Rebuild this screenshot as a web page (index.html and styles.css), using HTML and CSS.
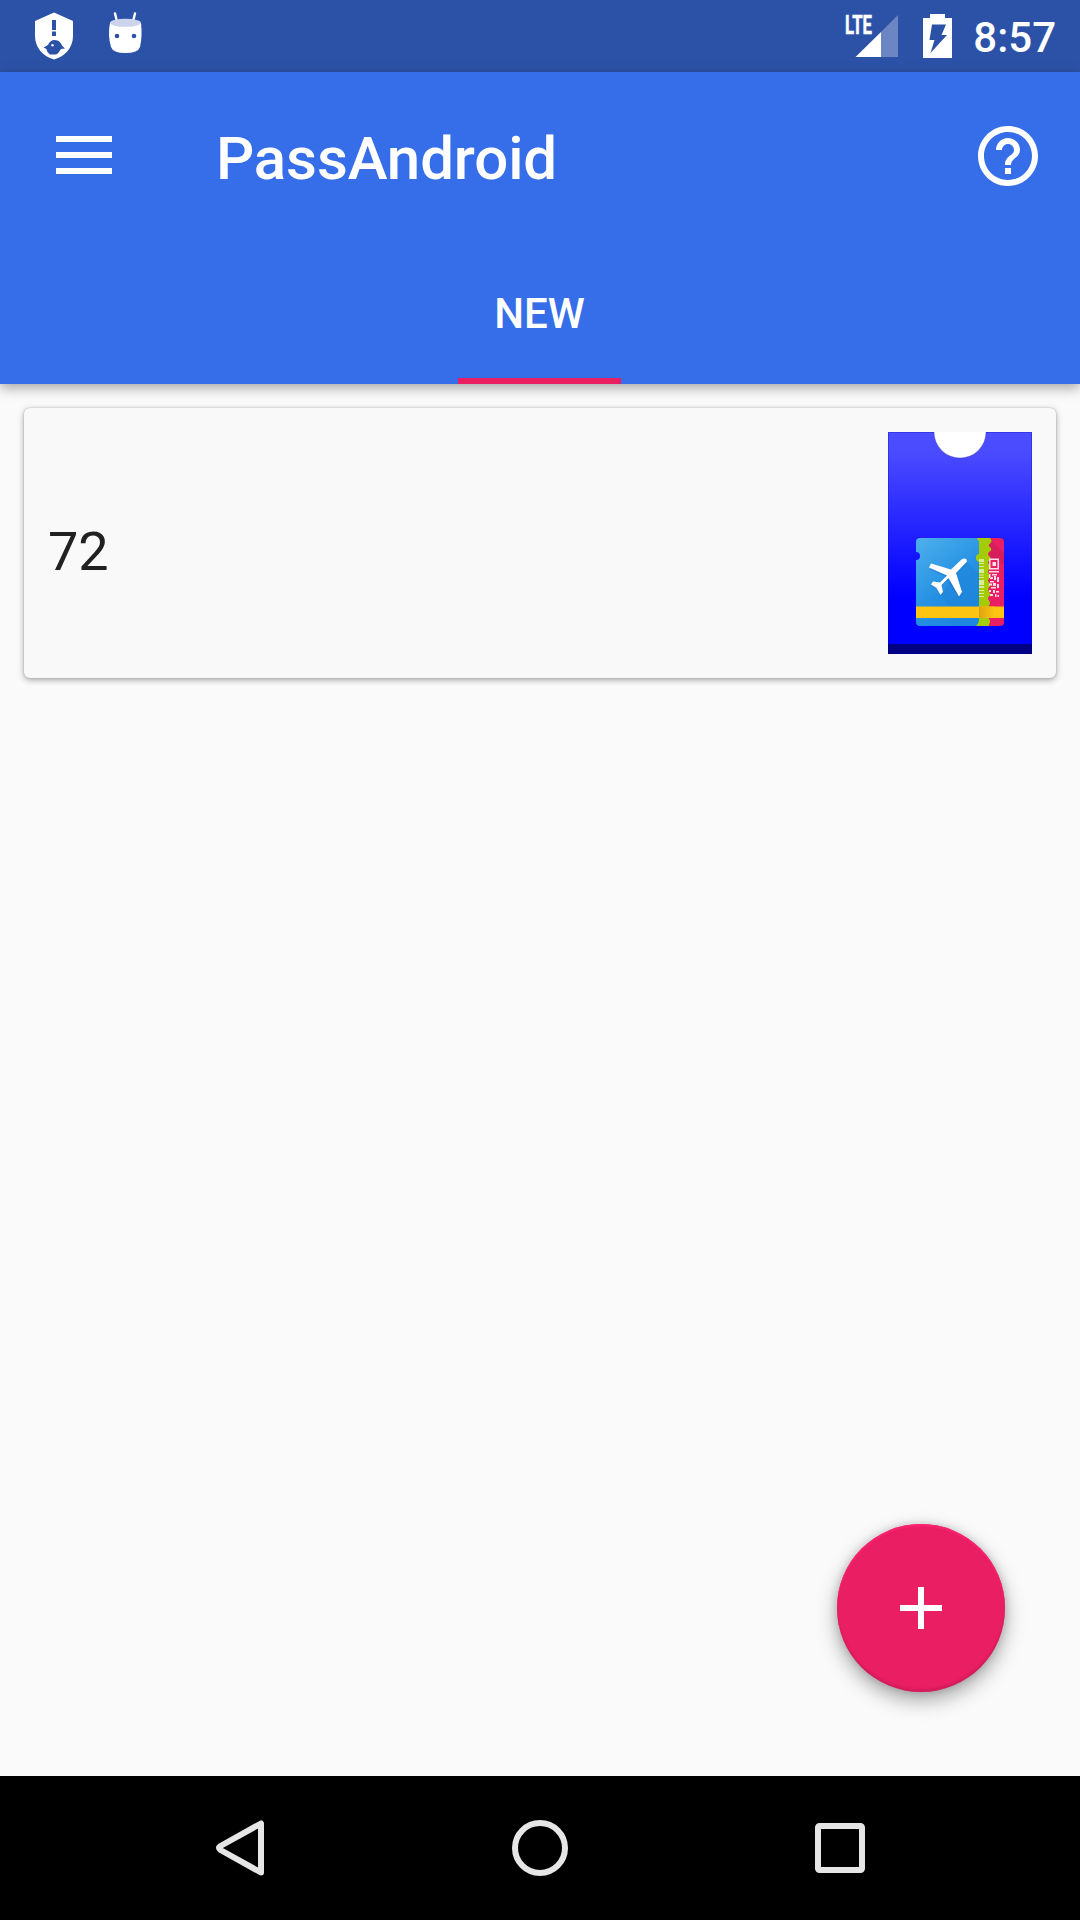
FILE: index.html
```html
<!DOCTYPE html>
<html lang="en">
<head>
<meta charset="utf-8">
<title>PassAndroid</title>
<link rel="stylesheet" href="styles.css">
</head>
<body>
<div class="screen">
  <header class="status">
    <svg class="status-shield" width="40" height="48" viewBox="0 0 40 48">
      <path fill="#fff" d="M20 .5 39 9v15c0 11.500-8 20.500-19 23.500C9 44.500 1 35.500 1 24V9z"/>
      <path fill="#2c52a8" d="M18 8h4v10h-4zM18 19.500h4V24h-4zM9.500 35.500l4.500-2.500c1-3 3.500-5 6.500-5 4.500 0 6.500 3 7.500 5.500l3 3-4 .500c-2 3-3 5-5 5.500h-6c-2-1.500-3-3-3.500-5.500z"/>
      <circle cx="18.500" cy="33.300" r="1.200" fill="#fff"/>
    </svg>
    <svg class="status-robot" width="36" height="42" viewBox="0 0 36 42">
      <path d="M8 1.500l2 8M28 1.500l-2 8" stroke="#fff" stroke-width="2.400" stroke-linecap="round"/>
      <path fill="#fff" d="M3 11h31q1.500 13-1 24-2 6-14.500 6T4 35Q.5 23 3 11z"/>
      <ellipse cx="18.500" cy="10.800" rx="15.500" ry="4" fill="#cbd4ea"/>
      <circle cx="10" cy="24" r="2.300" fill="#2c52a8"/>
      <circle cx="27" cy="24" r="2.300" fill="#2c52a8"/>
    </svg>
    <span class="spacer"></span>
    <svg class="status-signal" width="58" height="56" viewBox="-4 -12 58 56">
      <path fill="#6c86c3" d="M53 1v42H36V18z"/>
      <path fill="#fff" d="M36 18v25H10.500z"/>
      <text class="lte" x="0" y="20" textLength="27" lengthAdjust="spacingAndGlyphs">LTE</text>
    </svg>
    <svg class="status-battery" width="29" height="44" viewBox="0 0 29 44">
      <path fill="#fff" d="M7 0h15v4h7v40H0V4h7z"/>
      <path fill="#2c52a8" d="M9 10.500h14L18.500 21H24L7.500 39l4-13H6.500z"/>
    </svg>
    <span class="clock">8:57</span>
  </header>
  <div class="appbar">
    <div class="toolbar">
      <svg class="menu" width="56" height="38" viewBox="0 0 56 38"><path fill="#fff" d="M0 0h56v6H0zM0 16h56v6H0zM0 32h56v6H0z"/></svg>
      <h1 class="title">PassAndroid</h1>
      <span class="spacer"></span>
      <svg class="help" width="72" height="72" viewBox="0 0 24 24"><path fill="#fff" d="M11 18h2v-2h-2v2zm1-16C6.480 2 2 6.480 2 12s4.480 10 10 10 10-4.480 10-10S17.520 2 12 2zm0 18c-4.410 0-8-3.590-8-8s3.590-8 8-8 8 3.590 8 8-3.590 8-8 8zm0-14c-2.210 0-4 1.790-4 4h2c0-1.100.9-2 2-2s2 .9 2 2c0 2-3 1.750-3 5h2c0-2.250 3-2.500 3-5 0-2.210-1.790-4-4-4z"/></svg>
    </div>
    <nav class="tabs"><span class="tab">NEW</span></nav>
  </div>
  <main class="content">
    <article class="card">
      <span class="pass-name">72</span>
      <svg class="pass-art" width="144" height="222" viewBox="0 0 144 222">
        <defs>
          <linearGradient id="pass" x1="0" y1="0" x2="0" y2="1"><stop offset="0" stop-color="#4d4dff"/><stop offset=".1" stop-color="#4a4aff"/><stop offset=".74" stop-color="#00f"/></linearGradient>
          <linearGradient id="sky" x1="0" y1="0" x2=".6" y2="1"><stop offset="0" stop-color="#4eb0ec"/><stop offset=".65" stop-color="#2490e3"/><stop offset="1" stop-color="#1e88e0"/></linearGradient>
          <linearGradient id="fold"><stop offset="0" stop-color="#dca312"/><stop offset="1" stop-color="#fdc411"/></linearGradient>
          <clipPath id="ticket"><rect x="28" y="106" width="88" height="88" rx="4"/></clipPath>
        </defs>
        <path fill="url(#pass)" d="M0 0h144v222H0z"/>
        <path fill="none" stroke="#0000b4" stroke-opacity=".3" d="M.5 212V.5h143V212"/>
        <path fill="#000084" d="M0 212h144v10H0z"/>
        <path fill="#fff" stroke="#3030b0" stroke-opacity=".35" d="M46 -2V0a26 26 0 0 0 52 0v-2z"/>
        <g clip-path="url(#ticket)">
          <path fill="#e91e63" d="M96 106h20v88H96z"/>
          <path fill="#c71c58" d="M101 106l15 15v12l-15-8z" opacity=".5"/>
          <path fill="#a4cc05" d="M88 106h14q3 3 0 5.500-2.500 2 0 3.500 3 3-1 5-2 2 0 4 3 2 0 4.500-2 2 0 4 2 3 0 5-2 2 0 4 2 3 0 5-2 2 0 4 2 3 0 5-2 2 0 4 2 3 0 5-2 2 0 4 2 3 0 5-2 2 0 4 2 3 0 5-2 2 0 4 2 3 0 6V194H88z"/>
          <path fill="url(#sky)" d="M28 106h61q0 2 2 3v13q-3 0-3 4 0 3 3 4v58q0 3-3 6H28v-66q4 0 4-4t-4-4z"/>
          <path fill="#1c7fd4" opacity=".35" d="M79 130l12 12v38H66l-14-18z"/>
          <path fill="#fdc411" d="M28 174.500h88V186H28z"/>
          <path fill="url(#fold)" d="M91 174.500h15V186H91z"/>
        </g>
        <path fill="#1a4fbd" opacity=".25" transform="translate(.5 2)" d="M73.500 127.500q5-3 5 2L68 141l6 19-3 4.500-12-18-6 6 1.500 7-2.500 3-4-7-5.500-3.500 2-3 7 1 7-7-17-7 2-4 20 4z"/>
        <path fill="#fff" d="M73.500 127.500q5-3 5.500 2L68 141l6 19-3 4.500-10.500-18.500-7 7 1.500 7-2.500 3-4-7-5.500-3.500 2-3 7 1 7-7L41 135.500l2-4 20 6z"/>
        <g fill="#fff">
          <path opacity=".6" d="M91 127h5v3h-5zM91 131h5v1h-5zM91 134h5v1h-5zM91 137h5v4h-5zM91 142.500h5v1h-5zM91 145h5v1h-5zM91 148h5v5h-5zM91 154h5v2h-5zM91 158h5v1h-5zM91 161h5v1h-5zM91 164h5v1h-5z"/>
          <path opacity=".85" fill-rule="evenodd" d="M101 126.500h10v11h-10zM102.500 128v8h7v-8zM104.500 130h3.500v4h-3.500zM101 139h10v1.500h-10zM104 142h5v1.500h-5zM101 142h1.500v4H101zM102 145h3v2h-3zM106 144h2v4h-2zM109 145h2v5h-2zM102 149h4v1.500h-4zM105 151h3v3h-3zM101 151.500h3v2h-3zM109 152h2v4h-2zM103 155h5v1.500h-5zM101 158h2v2h-2zM105 158h2v3h-2zM108 159h3v1.500h-3zM102 162h3v2h-3zM107 162h1.500v3H107zM109.500 163h1.500v2h-1.500z"/>
        </g>
      </svg>
    </article>
    <button class="fab" aria-label="Add"><svg width="42" height="42" viewBox="0 0 42 42"><path fill="#fff" d="M18 0h6v18h18v6H24v18h-6V24H0v-6h18z"/></svg></button>
  </main>
  <footer class="navbar">
    <svg class="nav-back" width="50" height="58" viewBox="0 0 50 58"><path d="M46 4.500v49L5.500 31Q2.500 29 5.500 27z" fill="none" stroke="#e6e6e6" stroke-width="6" stroke-linejoin="round"/></svg>
    <svg class="nav-home" width="56" height="56" viewBox="0 0 56 56"><circle cx="28" cy="28" r="25" fill="none" stroke="#e6e6e6" stroke-width="6"/></svg>
    <svg class="nav-recent" width="50" height="50" viewBox="0 0 50 50"><rect x="3" y="3" width="44" height="44" rx="1.500" fill="none" stroke="#e6e6e6" stroke-width="6"/></svg>
  </footer>
</div>
</body>
</html>
```
FILE: styles.css
```css
* { box-sizing: border-box; }
body { margin: 0; font-family: Roboto, sans-serif; background: #fafafa; }
svg { display: block; flex: none; }
.screen { width: 1080px; height: 1920px; display: flex; flex-direction: column; overflow: hidden; }
.spacer { flex: 1; }

.status { height: 72px; flex: none; display: flex; align-items: flex-start; padding: 12px 24px 0 34px; background: #2c52a8; color: #fff; }
.status-robot { margin-left: 33px; }
.status-signal { margin: -10px 24px 0 0; }
.status-battery { margin: 2px 21px 0 0; }
.lte { font: 700 26px Roboto, sans-serif; fill: #fff; stroke: #fff; stroke-width: .5px; }
.clock { font-size: 42px; font-weight: 500; line-height: 52px; }

.appbar { height: 312px; flex: none; position: relative; z-index: 1; background: #366de8; color: #fff; box-shadow: 0 4px 12px rgba(0, 0, 0, .34); }
.toolbar { height: 168px; display: flex; align-items: center; padding: 0 36px 0 56px; }
.menu { margin-top: -2px; }
.title { margin: 6px 0 0 104px; font-size: 60px; font-weight: 500; line-height: 70px; letter-spacing: -.1px; }
.tabs { height: 144px; display: flex; justify-content: center; padding-right: 1px; }
.tab { width: 163px; border-bottom: 6px solid #e91e63; font-size: 42px; font-weight: 500; line-height: 148px; text-align: center; }

.content { flex: 1; display: flex; flex-direction: column; justify-content: space-between; padding: 24px 24px 84px; }
.card { height: 270px; display: flex; align-items: center; justify-content: space-between; padding: 24px; border-radius: 6px; background: #f9f9f9; box-shadow: 0 2px 6px rgba(0, 0, 0, .34), 0 0 2px rgba(0, 0, 0, .2); }
.pass-name { margin-top: 18px; font-size: 54px; line-height: 64px; color: #212121; }
.fab { width: 168px; height: 168px; margin-right: 51px; padding: 0; align-self: flex-end; display: flex; align-items: center; justify-content: center; border: 0; border-radius: 50%; background: #e91e63; box-shadow: 0 8px 20px rgba(0, 0, 0, .34), 0 0 8px rgba(0, 0, 0, .15), inset 0 -3px 2px rgba(170, 20, 75, .3), inset 0 2px 2px #ff2472; }

.navbar { height: 144px; flex: none; display: flex; align-items: center; justify-content: space-between; padding: 0 215px; background: #000; }
```
